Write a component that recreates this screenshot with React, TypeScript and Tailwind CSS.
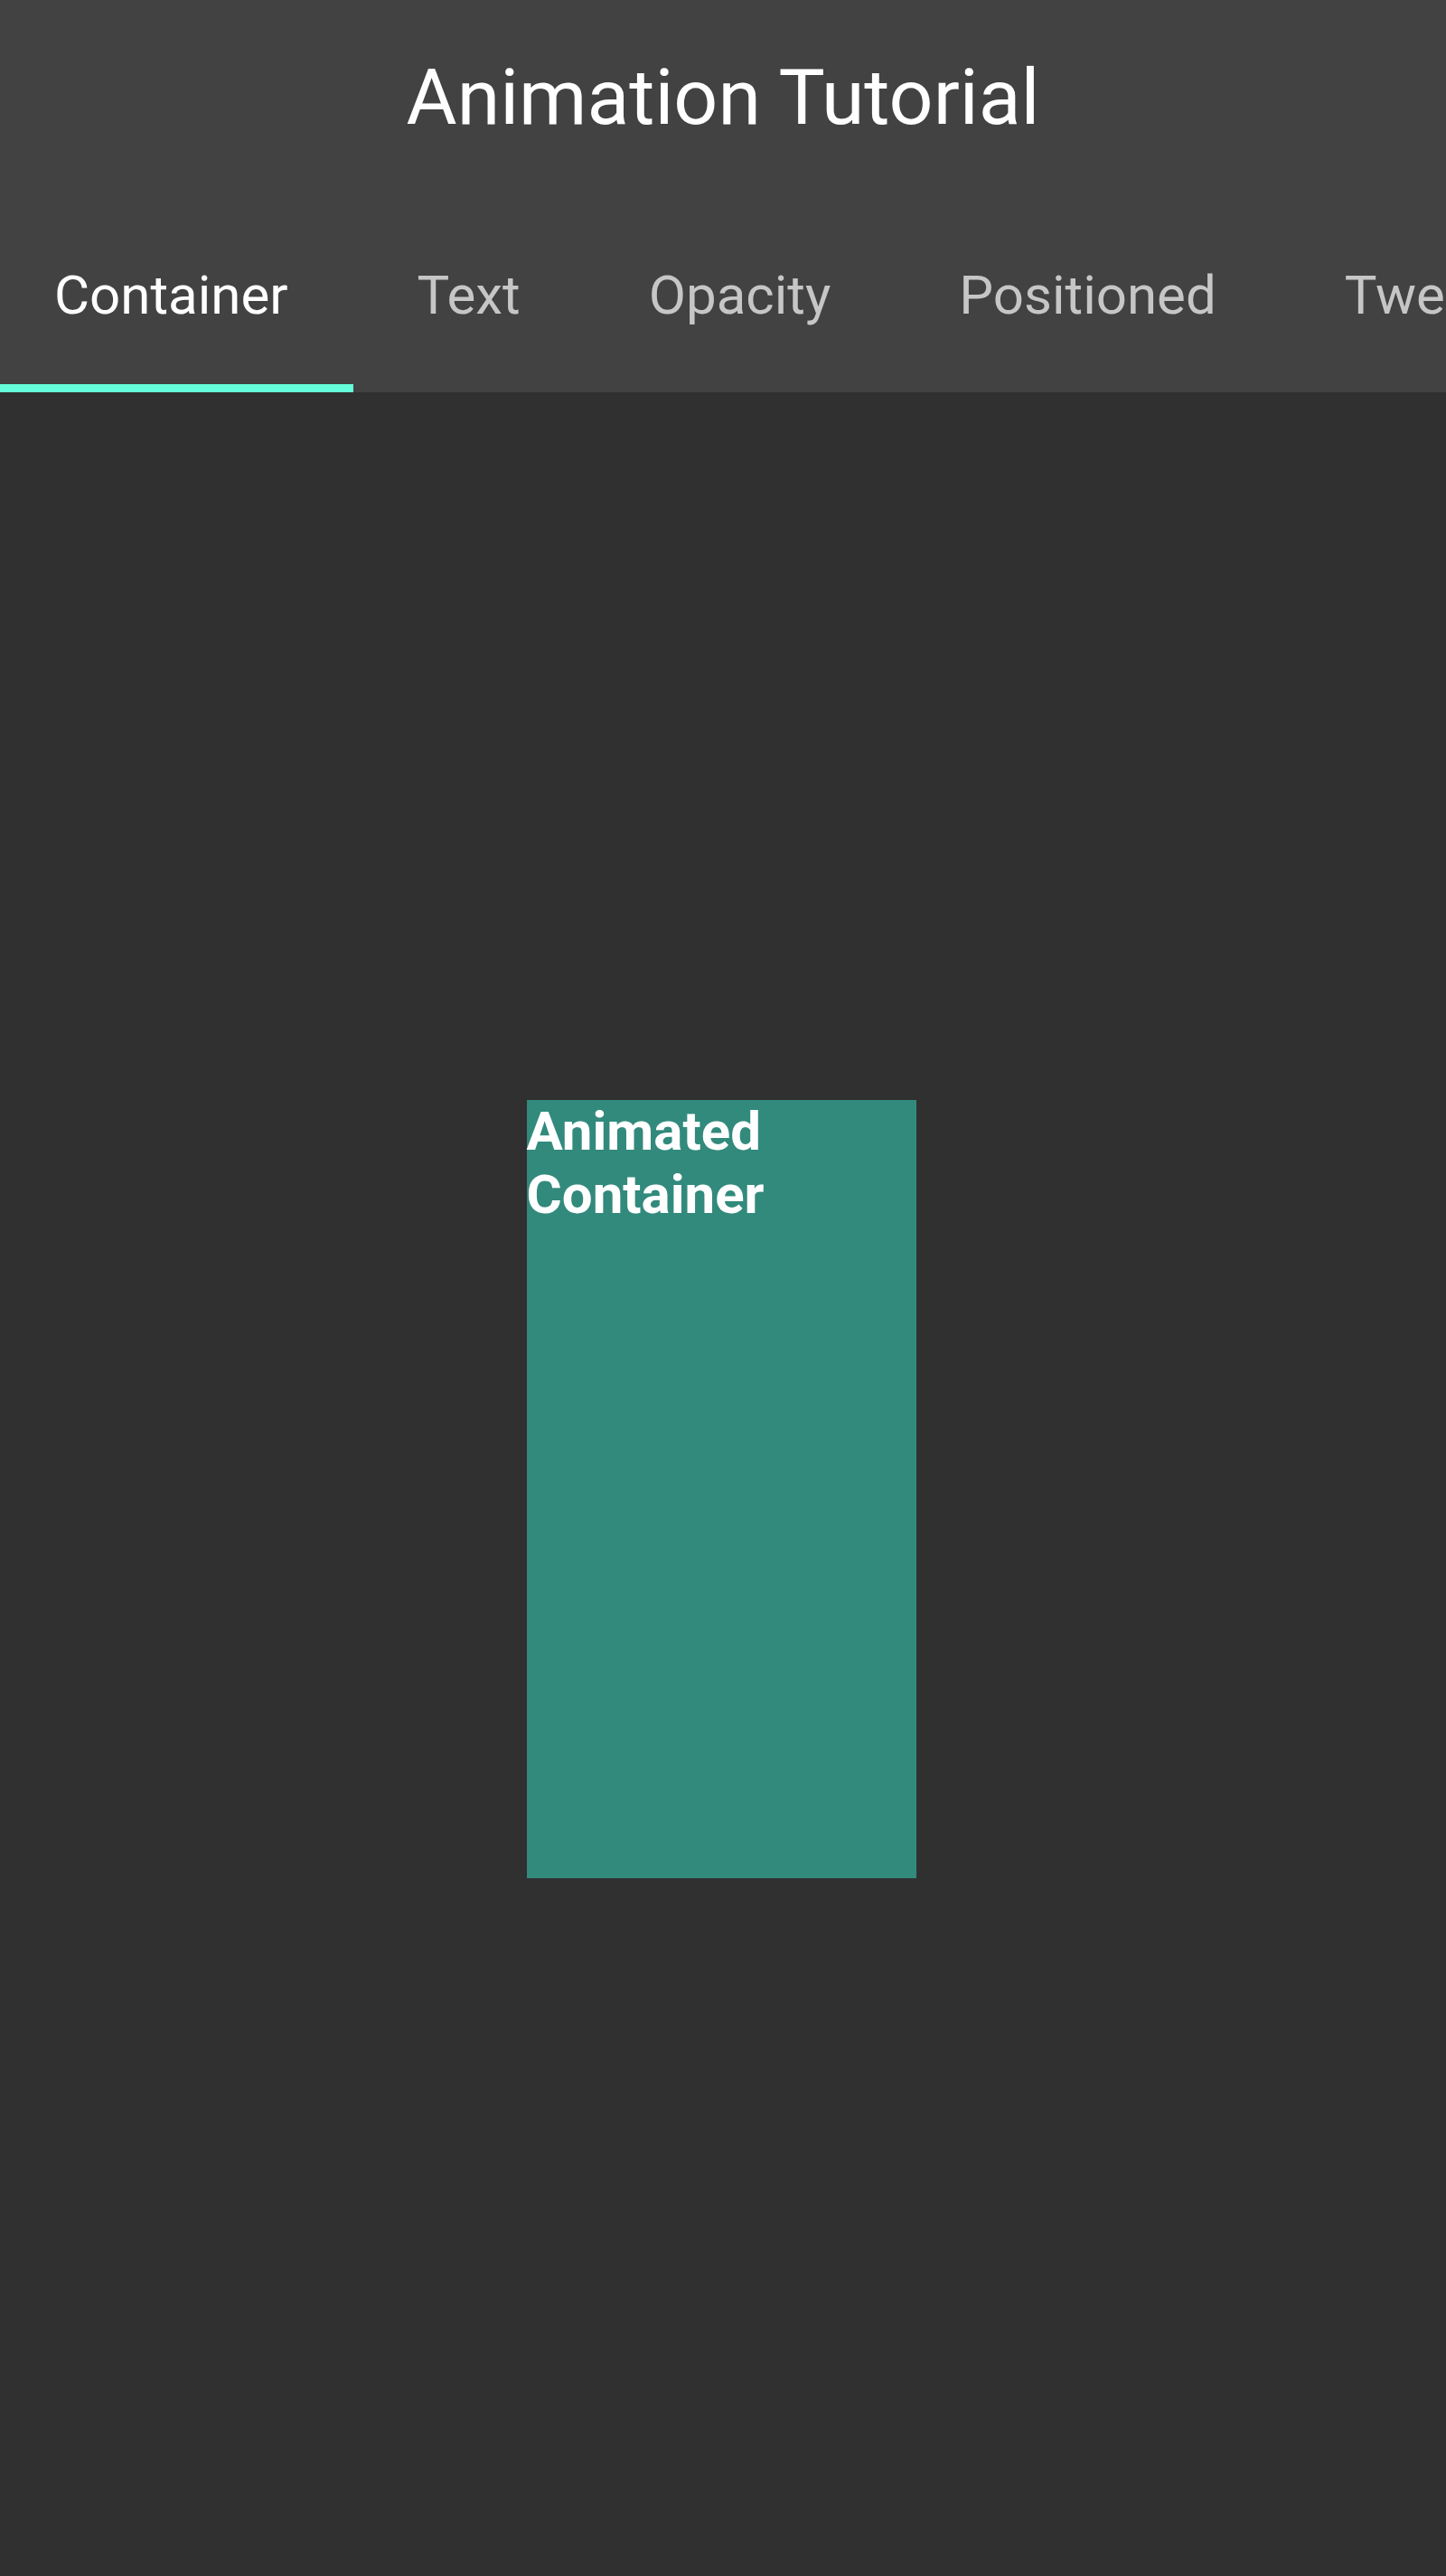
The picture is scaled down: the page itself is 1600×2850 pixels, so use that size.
const tabs = ["Container", "Text", "Opacity", "Positioned", "Tween", "Builder"]

export default function App() {
  const active = 0

  return (
    <div
      className="flex h-[2850px] w-[1600px] flex-col bg-[#303030]"
      style={{ fontFamily: "Roboto, 'Noto Sans', sans-serif" }}
    >
      {/* App bar */}
      <header className="flex shrink-0 flex-col bg-[#424242]">
        <div className="flex h-[216px] items-center justify-center">
          <h1 className="text-[86px] font-normal leading-none text-white">Animation Tutorial</h1>
        </div>

        {/* Scrollable tab bar */}
        <nav className="flex h-[218px] overflow-hidden whitespace-nowrap">
          {tabs.map((tab, i) => (
            <button
              key={tab}
              type="button"
              className={`flex shrink-0 flex-col ${i === 0 ? "pl-[60px] pr-[72px]" : "px-[71px]"}`}
            >
              <span
                className={`flex flex-1 items-center pt-[12px] text-[60px] leading-none ${
                  i === active ? "text-white" : "text-[#c6c6c6]"
                }`}
              >
                {tab}
              </span>
              {/* indicator slot: every tab keeps the 9px so labels line up */}
              <span
                className={`h-[9px] ${
                  i === active ? "ml-[-60px] mr-[-72px] bg-[#64ffda]" : "bg-transparent"
                }`}
              />
            </button>
          ))}
        </nav>
      </header>

      {/* Body */}
      <main className="flex flex-1 items-center justify-center pt-[10px] pr-[4px]">
        <div className="h-[861px] w-[431px] bg-[#328a7c]">
          <p className="text-[60px] font-bold leading-[1.172] text-white">Animated Container</p>
        </div>
      </main>
    </div>
  )
}
